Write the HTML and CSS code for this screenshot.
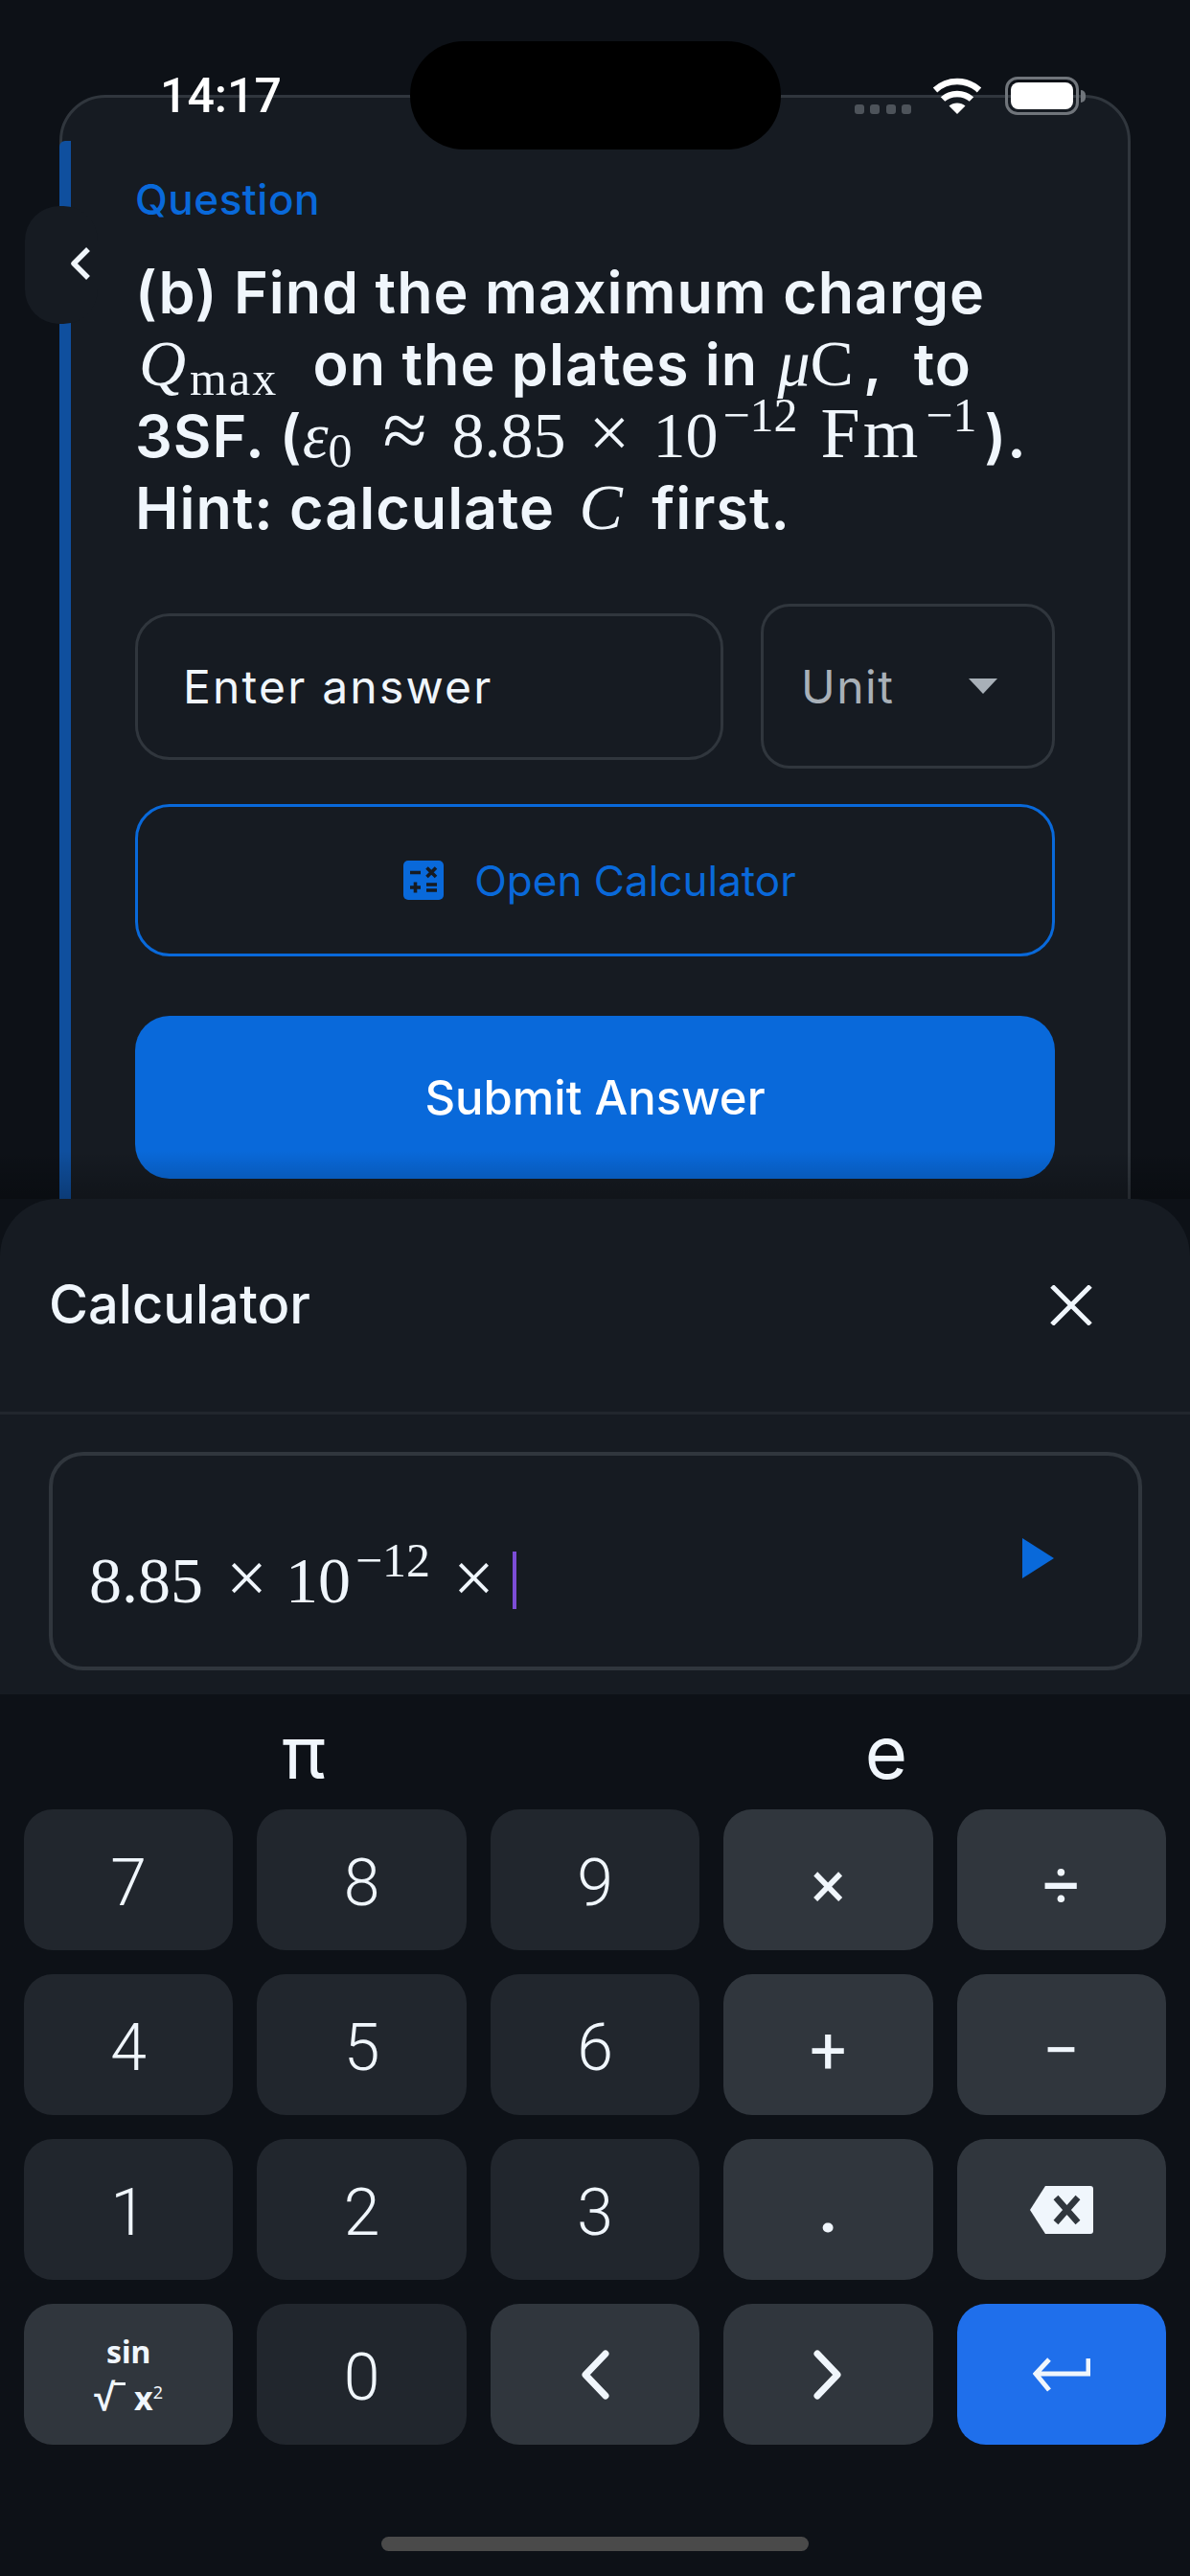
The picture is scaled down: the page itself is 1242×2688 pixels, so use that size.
FILE: index.html
```html
<!DOCTYPE html>
<html lang="en">
<head>
  <meta charset="UTF-8" />
  <title>Question</title>
  <link rel="stylesheet" href="styles.css">
</head>
<body>

  <div class="statusBar">
    <span class="time">14:17</span>
    <div class="statusIcons">
      <div class="signal"><i></i><i></i><i></i><i></i></div>
      <svg class="wifi" viewBox="0 0 52 38" width="52" height="38">
        <path d="M3 13C16 1 36 1 49 13" fill="none" stroke="#fff" stroke-width="6.5"/>
        <path d="M11 22.500C19 15 33 15 41 22.500" fill="none" stroke="#fff" stroke-width="6.500"/>
        <path d="M17.500 29.500C22 25.500 30 25.500 34.500 29.500L26 38Z" fill="#fff"/>
      </svg>
      <div class="battery"><div class="batteryFill"></div></div>
      <div class="batteryNub"></div>
    </div>
  </div>
  <div class="island"></div>

  <div class="backBtn">
    <svg viewBox="0 0 24 36" width="24" height="36"><path d="M20 3L5 18L20 33" fill="none" stroke="#f0f6fc" stroke-width="5.500" stroke-linejoin="round"/></svg>
  </div>

  <div class="page">
    <div class="card">
      <div class="label">Question</div>
      <div class="question">
        (b) Find the maximum charge<br>
        <span class="math lead"><em class="q">Q</em><sub>max</sub></span> on the plates in <span class="math inWord"><em>μ</em>C</span><span class="comma">,</span> to<br>
        3SF. (<span class="math"><em>ε</em><sub>0</sub><span class="rel approx">≈</span>8.85<span class="rel">×</span>10<sup>−12</sup><span class="unit">Fm</span><sup>−1</sup></span><span class="closeParen">).</span><br>
        Hint: calculate <span class="math spaced"><em>C</em></span> first.
      </div>

      <div class="answerRow">
        <div class="answerInput">Enter answer</div>
        <div class="unitSelect">
          <span>Unit</span>
          <div class="caretDown"></div>
        </div>
      </div>

      <div class="calcBtn">
        <svg viewBox="0 0 42 41" width="42" height="41">
          <rect width="42" height="41" rx="5" fill="#0969da"/>
          <path d="M7 12.500H18M24.500 7.500L34 17M34 7.500L24.500 17M7 28H18M12.500 22.500V33.500M24 25H35M24 31H35" stroke="#161b22" stroke-width="3.600" fill="none"/>
        </svg>
        <span>Open Calculator</span>
      </div>

      <div class="submitBtn">Submit Answer</div>
    </div>
  </div>

  <div class="sheet">
    <div class="sheetHead">
      <span class="sheetTitle">Calculator</span>
      <svg viewBox="0 0 44 42" width="44" height="42"><path d="M2 1L42 41M42 1L2 41" stroke="#f0f6fc" stroke-width="5" fill="none"/></svg>
    </div>
    <div class="mathField">
      <div class="mathValue">8.85<span class="rel">×</span>10<sup>−12</sup><span class="rel last">×</span><span class="cursor"></span></div>
      <div class="playIcon"></div>
    </div>
  </div>

  <div class="keyboard">
    <div class="constants">
      <span>π</span>
      <span>e</span>
    </div>
    <div class="keys">
      <div class="key">7</div>
      <div class="key">8</div>
      <div class="key">9</div>
      <div class="key op">×</div>
      <div class="key op">÷</div>

      <div class="key">4</div>
      <div class="key">5</div>
      <div class="key">6</div>
      <div class="key op">+</div>
      <div class="key op">−</div>

      <div class="key">1</div>
      <div class="key">2</div>
      <div class="key">3</div>
      <div class="key op dot">.</div>
      <div class="key op icon">
        <svg viewBox="0 0 68 52" width="68" height="52">
          <path d="M17 1H64Q67 1 67 4V48Q67 51 64 51H17L1 26Z" fill="#f0f6fc"/>
          <path d="M28 13L51 39M51 13L28 39" stroke="#30363d" stroke-width="6.500" fill="none"/>
        </svg>
      </div>

      <div class="key op fnKey">
        <span class="fnTop">sin</span>
        <span class="fnBottom"><span class="root">√</span><span class="rootBar"></span> x<sup>2</sup></span>
      </div>
      <div class="key">0</div>
      <div class="key op icon">
        <svg viewBox="0 0 32 52" width="32" height="52"><path d="M27 4L6 26L27 48" fill="none" stroke="#f0f6fc" stroke-width="7" stroke-linecap="round" stroke-linejoin="round"/></svg>
      </div>
      <div class="key op icon">
        <svg viewBox="0 0 32 52" width="32" height="52"><path d="M5 4L26 26L5 48" fill="none" stroke="#f0f6fc" stroke-width="7" stroke-linecap="round" stroke-linejoin="round"/></svg>
      </div>
      <div class="key enter">
        <svg viewBox="0 0 60 36" width="60" height="36"><path d="M58 1V17H4M17 2L3 17L17 34" fill="none" stroke="#f0f6fc" stroke-width="5"/></svg>
      </div>
    </div>
    <div class="homeBar"></div>
  </div>

</body>
</html>
```

FILE: styles.css
```css
html, body {
  margin: 0;
  width: 1242px;
  height: 2688px;
  overflow: hidden;
  background-color: #0d1117;
  color: #f0f6fc;
  font-family: Inter, "Liberation Sans", sans-serif;
  position: relative;
}

/* status bar */
.statusBar {
  position: absolute;
  top: 80px;
  left: 167px;
  right: 109px;
  height: 40px;
  display: flex;
  justify-content: space-between;
  align-items: center;
  z-index: 5;
}
.time {
  font-family: Roboto, sans-serif;
  font-size: 50px;
  font-weight: 500;
  line-height: 40px;
  color: #fff;
}
.statusIcons {
  display: flex;
  align-items: center;
}
.signal {
  display: flex;
  gap: 6.500px;
  align-self: flex-end;
  margin-right: 22px;
  margin-bottom: 1px;
}
.signal i {
  width: 10px;
  height: 10px;
  border-radius: 3px;
  background-color: #4d535a;
}
.wifi {
  margin-right: 24px;
}
.battery {
  box-sizing: border-box;
  width: 77px;
  height: 40px;
  padding: 3px;
  border: 3px solid #70757b;
  border-radius: 13px;
}
.batteryFill {
  height: 100%;
  background-color: #fff;
  border-radius: 8px;
}
.batteryNub {
  width: 5px;
  height: 13px;
  margin-left: 2px;
  background-color: #70757b;
  border-radius: 0 5px 5px 0;
}
.island {
  position: absolute;
  top: 43px;
  left: 428px;
  width: 387px;
  height: 113px;
  border-radius: 56px;
  background-color: #000;
  z-index: 6;
}

.backBtn {
  position: absolute;
  top: 215px;
  left: 26px;
  width: 76px;
  height: 123px;
  padding-top: 42px;
  padding-left: 46px;
  box-sizing: border-box;
  border-radius: 36px;
  background-color: #161b22;
  z-index: 4;
}
.backBtn svg {
  display: block;
}

/* question card */
.page {
  box-sizing: border-box;
  height: 1251px;
  padding: 99px 62px 0;
  overflow: hidden;
  position: relative;
}
.page::after {
  content: "";
  position: absolute;
  left: 0;
  right: 0;
  bottom: 0;
  height: 50px;
  background: linear-gradient(rgba(0,0,0,0), rgba(0,0,0,0.25));
}
.card {
  box-sizing: border-box;
  height: 1300px;
  padding: 80px 76px 0;
  background-color: #161b22;
  border: 3px solid #30363d;
  border-radius: 48px 48px 0 0;
  position: relative;
}
.card::before {
  content: "";
  position: absolute;
  left: -3px;
  top: 45px;
  bottom: 0;
  width: 12px;
  border-radius: 6px 0 0 0;
  background-color: #0f4f9e;
}
.label {
  font-size: 44px;
  font-weight: 500;
  line-height: 52px;
  letter-spacing: 0.500px;
  color: #0969da;
}
.question {
  margin-top: 34px;
  font-size: 61px;
  font-weight: 600;
  line-height: 75px;
  letter-spacing: 1px;
  white-space: nowrap;
}

/* math is plain serif text, sized to sit like the typeset formulas */
.math {
  font-family: "Liberation Serif", serif;
  font-size: 68px;
  font-weight: 400;
  line-height: 0;
  letter-spacing: 0;
}
.math.lead {
  margin: 0 20px 0 4px;
}
.math.lead sub {
  margin: 0 0 0 4px;
  letter-spacing: 2px;
}
.math.inWord {
  margin-left: 4px;
  margin-right: 10px;
}
.comma {
  margin-right: 16px;
}
.math.spaced {
  margin: 0 14px 0 9px;
}
.math em {
  font-style: italic;
}
.math sub {
  font-size: 50px;
  line-height: 0;
  margin-right: 8px;
  vertical-align: -10px;
}
.math sup, .mathValue sup {
  font-size: 50px;
  line-height: 0;
  margin-left: 5px;
  vertical-align: 27px;
}
.rel {
  font-size: 76px;
  font-weight: 400;
  line-height: 0;
  margin: 0 24px;
}
.rel.approx {
  font-size: 84px;
  margin: 0 26px 0 24px;
}
.unit {
  font-size: 74px;
  letter-spacing: 3px;
  margin-left: 24px;
}
.closeParen {
  margin-left: 8px;
}

.answerRow {
  display: flex;
  align-items: center;
  gap: 39px;
  margin-top: 62px;
}
.answerInput {
  flex: 1;
  box-sizing: border-box;
  height: 153px;
  padding-left: 47px;
  display: flex;
  align-items: center;
  font-size: 48px;
  letter-spacing: 2.200px;
  border: 3px solid #30363d;
  border-radius: 36px;
}
.unitSelect {
  box-sizing: border-box;
  width: 307px;
  height: 172px;
  padding: 0 57px 0 39px;
  display: flex;
  align-items: center;
  justify-content: space-between;
  font-size: 48px;
  letter-spacing: 1.500px;
  color: #a8b0b8;
  border: 3px solid #30363d;
  border-radius: 30px;
}
.caretDown {
  width: 0;
  height: 0;
  border-left: 15px solid transparent;
  border-right: 15px solid transparent;
  border-top: 16px solid #a8b0b8;
}
.calcBtn {
  box-sizing: border-box;
  height: 159px;
  margin-top: 37px;
  padding-left: 10px;
  display: flex;
  align-items: center;
  justify-content: center;
  gap: 32px;
  font-size: 44px;
  color: #0969da;
  border: 3px solid #0969da;
  border-radius: 36px;
}
.submitBtn {
  height: 170px;
  margin-top: 62px;
  display: flex;
  align-items: center;
  justify-content: center;
  font-size: 49px;
  font-weight: 500;
  color: #fff;
  background-color: #0969da;
  border-radius: 36px;
}

/* calculator sheet */
.sheet {
  box-sizing: border-box;
  height: 517px;
  padding-bottom: 25px;
  background-color: #161b22;
  border-radius: 60px 60px 0 0;
  position: relative;
  display: flex;
  flex-direction: column;
}
.sheetHead {
  box-sizing: border-box;
  height: 225px;
  padding: 90px 102px 0 51px;
  display: flex;
  justify-content: space-between;
  align-items: flex-start;
  border-bottom: 3px solid #21262d;
}
.sheetTitle {
  font-size: 56px;
  font-weight: 500;
  line-height: 40px;
}
.mathField {
  box-sizing: border-box;
  flex: 1;
  margin: 39px 50px 0 51px;
  padding: 0 88px 0 38px;
  display: flex;
  justify-content: space-between;
  align-items: center;
  border: 4px solid #30363d;
  border-radius: 36px;
}
.mathValue {
  font-family: "Liberation Serif", serif;
  font-size: 68px;
  line-height: 60px;
  margin-top: 40px;
  white-space: nowrap;
}
.mathValue .rel {
  margin-right: 19px;
}
.mathValue .rel.last {
  margin: 0 0 0 24px;
}
.cursor {
  display: inline-block;
  width: 4px;
  height: 60px;
  margin-left: 19px;
  vertical-align: -7px;
  background-color: #7c4dd6;
}
.playIcon {
  width: 0;
  height: 0;
  margin-top: -6px;
  border-top: 21px solid transparent;
  border-bottom: 21px solid transparent;
  border-left: 33px solid #0969da;
}

/* keyboard */
.constants {
  height: 120px;
  padding: 0 13px;
  display: grid;
  grid-template-columns: 1fr 1fr;
  align-items: center;
  justify-items: center;
  font-size: 76px;
  font-weight: 400;
  color: #f0f6fc;
}
.keys {
  padding: 0 25px;
  display: grid;
  grid-template-columns: repeat(5, 1fr);
  grid-auto-rows: 147px;
  gap: 25px;
}
.key {
  box-sizing: border-box;
  padding-top: 6px;
  display: flex;
  align-items: center;
  justify-content: center;
  background-color: #21262d;
  border-radius: 30px;
  font-family: Roboto, sans-serif;
  font-size: 68px;
  font-weight: 360;
}
.key.op {
  background-color: #30363d;
  padding-top: 12px;
  font-weight: 400;
}
.key.icon, .key.enter {
  padding-top: 0;
}
.key.dot {
  padding-top: 0;
  font-weight: 700;
}
.key.enter {
  background-color: #1f6feb;
}
.key.fnKey {
  padding-top: 0;
  flex-direction: column;
  font-family: "Noto Sans", sans-serif;
  font-weight: 700;
  gap: 8px;
}
.fnTop {
  font-size: 32px;
  line-height: 40px;
}
.fnBottom {
  font-size: 34px;
  line-height: 40px;
}
.root {
  font-size: 40px;
  font-weight: 700;
  line-height: 0;
}
.rootBar {
  display: inline-block;
  width: 12px;
  height: 0;
  margin-left: -1px;
  vertical-align: 26px;
  border-top: 3px solid #f0f6fc;
}
.fnBottom sup {
  font-size: 18px;
  font-weight: 400;
  line-height: 0;
}
.homeBar {
  width: 446px;
  height: 15px;
  margin: 96px auto 0;
  border-radius: 8px;
  background-color: #4a4a4a;
}
```
